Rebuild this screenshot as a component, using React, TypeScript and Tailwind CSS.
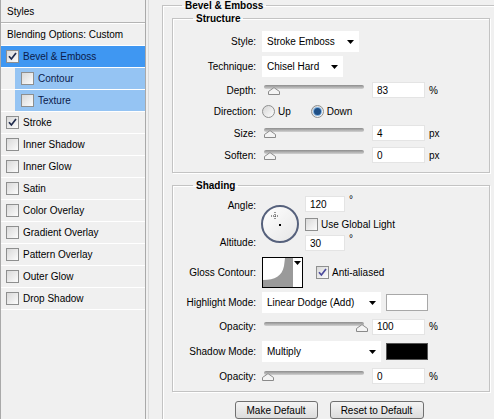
import React from 'react';

type Item = { label: string; checked?: boolean; active?: boolean; sub?: boolean };

const items: Item[] = [
  { label: 'Bevel & Emboss', checked: true, active: true },
  { label: 'Contour', sub: true },
  { label: 'Texture', sub: true },
  { label: 'Stroke', checked: true },
  { label: 'Inner Shadow' },
  { label: 'Inner Glow' },
  { label: 'Satin' },
  { label: 'Color Overlay' },
  { label: 'Gradient Overlay' },
  { label: 'Pattern Overlay' },
  { label: 'Outer Glow' },
  { label: 'Drop Shadow' },
];

const CheckBox = ({ checked, tone = '#1f2b4d' }: { checked?: boolean; tone?: string }) => (
  <span className="inline-flex w-[13px] h-[13px] shrink-0 items-center justify-center border border-[#8e8f8f] bg-linear-to-br from-[#d9d9d9] to-[#fcfcfc]">
    {checked && (
      <svg width="9" height="9" viewBox="0 0 9 9">
        <path d="M1 4.2 L3.4 7 L8 1" stroke={tone} strokeWidth="1.7" fill="none" />
      </svg>
    )}
  </span>
);

const Radio = ({ on }: { on?: boolean }) => (
  <span className="inline-flex w-[13px] h-[13px] shrink-0 items-center justify-center rounded-full border border-[#8e8f8f] bg-linear-to-br from-[#d6d6d6] to-[#fdfdfd]">
    {on && <span className="w-[7px] h-[7px] rounded-full bg-[#1e4f86] ring-1 ring-[#7fb0e0]" />}
  </span>
);

const Arrow = () => (
  <svg width="7" height="4" viewBox="0 0 7 4">
    <polygon points="0,0 7,0 3.5,4" fill="#000" />
  </svg>
);

const Select = ({ text, w }: { text: string; w: string }) => (
  <div className={`${w} h-[21px] bg-white flex items-center justify-between pl-[5px] pr-[5px]`}>
    <span>{text}</span>
    <Arrow />
  </div>
);

const Field = ({ value, w = 'w-[53px]' }: { value: string; w?: string }) => (
  <div className={`${w} h-[16px] bg-white border border-[#e4e4e4] flex items-center pl-[4px]`}>{value}</div>
);

// thumb sits over the track, offset = thumb centre along the track
const Slider = ({ at }: { at: number }) => (
  <div className="relative w-[100px] h-[12px] ml-[2px]">
    <div className="absolute left-0 right-0 top-[1px] h-[4px] rounded-[2px] bg-linear-to-b from-[#8d8d8d] to-[#d2d2d2]" />
    <svg
      className="absolute top-[3px]"
      style={{ left: at - 6 }}
      width="12"
      height="8"
      viewBox="0 0 12 8"
    >
      <path d="M0.5 7.5 L0.5 4.5 L6 0.6 L11.5 4.5 L11.5 7.5 Z" fill="#f4f4f4" stroke="#8a8a8a" />
    </svg>
  </div>
);

const Label = ({ children }: { children: React.ReactNode }) => (
  <div className="w-[83px] shrink-0 text-right">{children}</div>
);

const Row = ({ h, label, children }: { h: string; label: string; children: React.ReactNode }) => (
  <div className={`${h} flex items-center`}>
    <Label>{label}</Label>
    <div className="ml-[6px] flex items-center">{children}</div>
  </div>
);

export default function App() {
  return (
    <div className="w-[494px] h-[419px] overflow-hidden bg-[#f0f0f0] text-[10px] text-black leading-[13px] font-['Liberation_Sans',Arial,sans-serif] flex">
      {/* styles list */}
      <div className="w-[146px] h-full shrink-0 border-l border-r border-[#a9a9a9]">
        <div className="h-[23px] flex items-center pl-[6px] border-b border-[#b4b4b4]">Styles</div>
        <div className="h-[23px] flex items-center pl-[6px] border-t border-b border-white">Blending Options: Custom</div>
        {items.map((it) => (
          <div key={it.label} className={`h-[22px] flex border-b border-white ${it.sub ? 'pl-[14px]' : ''}`}>
            <div
              className={`flex-1 flex items-center gap-[3px] ${
                it.active ? 'bg-[#3f97f2] text-[#0b1a4a] pl-[5px]' : it.sub ? 'bg-[#95c4f3] text-[#0b1a4a] pl-[6px]' : 'pl-[5px]'
              }`}
            >
              <CheckBox checked={it.checked} />
              <span className="ml-[1px]">{it.label}</span>
            </div>
          </div>
        ))}
      </div>

      {/* options */}
      <div className="ml-[2px] h-full border-l border-[#dadada] pl-[13px]">
        <fieldset className="-mt-[1px] w-[336px] h-[440px] border border-[#c3c3c3] shadow-[inset_1px_1px_0_#fff]">
          <legend className="ml-[19px] px-[3px] font-bold">Bevel &amp; Emboss</legend>

          <fieldset className="ml-[9px] w-[318px] border border-[#c3c3c3] shadow-[inset_1px_1px_0_#fff,1px_1px_0_#fff] pt-[4px] pb-[6px]">
            <legend className="ml-[20px] px-[3px] font-bold">Structure</legend>
            <Row h="h-[25px]" label="Style:">
              <Select text="Stroke Emboss" w="w-[97px]" />
            </Row>
            <Row h="h-[25px]" label="Technique:">
              <Select text="Chisel Hard" w="w-[81px]" />
            </Row>
            <Row h="h-[22px]" label="Depth:">
              <Slider at={10} />
              <div className="ml-[8px]"><Field value="83" /></div>
              <span className="ml-[4px]">%</span>
            </Row>
            <Row h="h-[21px]" label="Direction:">
              <Radio />
              <span className="ml-[3px]">Up</span>
              <span className="ml-[20px]"><Radio on /></span>
              <span className="ml-[3px]">Down</span>
            </Row>
            <Row h="h-[22px]" label="Size:">
              <Slider at={6} />
              <div className="ml-[8px]"><Field value="4" /></div>
              <span className="ml-[4px]">px</span>
            </Row>
            <Row h="h-[22px]" label="Soften:">
              <Slider at={6} />
              <div className="ml-[8px]"><Field value="0" /></div>
              <span className="ml-[4px]">px</span>
            </Row>
          </fieldset>

          <fieldset className="ml-[9px] mt-[6px] w-[318px] border border-[#c3c3c3] shadow-[inset_1px_1px_0_#fff,1px_1px_0_#fff] pt-[3px] pb-[3px]">
            <legend className="ml-[20px] px-[3px] font-bold">Shading</legend>

            <div className="h-[58px] flex">
              <div className="w-[83px] h-full flex flex-col justify-between py-[4px] text-right">
                <span>Angle:</span>
                <span>Altitude:</span>
              </div>
              <div className="ml-[5px] mt-[10px] w-[38px] h-[38px] rounded-full border-2 border-[#56617c] bg-linear-to-br from-[#ffffff] to-[#e6e6e6] flex items-center justify-center">
                <svg width="34" height="34" viewBox="0 0 34 34">
                  <path d="M12 5 V13 M8 9 H16" stroke="#333" strokeWidth="1" strokeDasharray="1 1" />
                  <rect x="16" y="17" width="2" height="2" fill="#000" />
                </svg>
              </div>
              <div className="ml-[6px] pt-[1px] flex flex-col">
                <div className="flex">
                  <Field value="120" w="w-[40px]" />
                  <span className="ml-[4px] -mt-[3px]">°</span>
                </div>
                <div className="mt-[6px] flex items-center gap-[3px]">
                  <CheckBox />
                  <span>Use Global Light</span>
                </div>
                <div className="mt-[4px] flex">
                  <Field value="30" w="w-[40px]" />
                  <span className="ml-[4px] -mt-[3px]">°</span>
                </div>
              </div>
            </div>

            <Row h="h-[38px]" label="Gloss Contour:">
              <div className="w-[41px] h-[31px] border border-black bg-white flex">
                <svg width="30" height="29" viewBox="0 0 30 29">
                  <path d="M0 29 L0 22 C12 22 19 18 21 8 L22 0 L30 0 L30 29 Z" fill="#9a9a9a" />
                </svg>
                <div className="flex-1 flex justify-center pt-[3px]">
                  <Arrow />
                </div>
              </div>
              <div className="ml-[13px] flex items-center gap-[3px]">
                <CheckBox checked tone="#4b4a9c" />
                <span>Anti-aliased</span>
              </div>
            </Row>
            <Row h="h-[23px]" label="Highlight Mode:">
              <Select text="Linear Dodge (Add)" w="w-[119px]" />
              <div className="ml-[5px] w-[42px] h-[17px] bg-white border border-[#a8a8a8]" />
            </Row>
            <Row h="h-[25px]" label="Opacity:">
              <Slider at={98} />
              <div className="ml-[8px]"><Field value="100" /></div>
              <span className="ml-[4px]">%</span>
            </Row>
            <Row h="h-[25px]" label="Shadow Mode:">
              <Select text="Multiply" w="w-[119px]" />
              <div className="ml-[5px] w-[42px] h-[17px] bg-black border border-[#555]" />
            </Row>
            <Row h="h-[24px]" label="Opacity:">
              <Slider at={4} />
              <div className="ml-[8px]"><Field value="0" /></div>
              <span className="ml-[4px]">%</span>
            </Row>
          </fieldset>

          <div className="mt-[9px] flex justify-center gap-[12px] pr-[2px]">
            <button className="w-[83px] h-[18px] rounded-[3px] border border-[#707070] bg-linear-to-b from-[#f4f4f4] to-[#dcdcdc] text-[10px] leading-[13px]">
              Make Default
            </button>
            <button className="w-[94px] h-[18px] rounded-[3px] border border-[#707070] bg-linear-to-b from-[#f4f4f4] to-[#dcdcdc] text-[10px] leading-[13px]">
              Reset to Default
            </button>
          </div>
        </fieldset>
      </div>
    </div>
  );
}
